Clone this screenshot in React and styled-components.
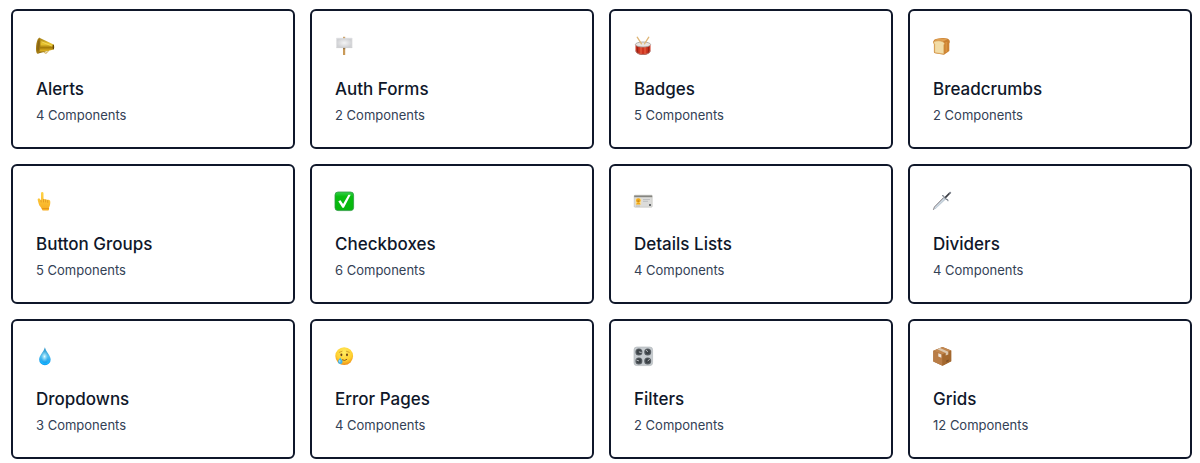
import React from 'react'
import styled, { createGlobalStyle } from 'styled-components'

const GlobalStyle = createGlobalStyle`
    body {
        margin: 0;
        background-color: #fff;
        font-family: Inter, 'Liberation Sans', sans-serif;
    }
`
const Grid = styled.ul`
    display: grid;
    grid-template-columns: repeat(4, minmax(0, 1fr));
    gap: 15px;
    margin: 0;
    padding: 9px 8px 4px 11px;
    list-style: none;
`
const Card = styled.a`
    display: block;
    padding: 23px;
    border: 2px solid #0f172a;
    border-radius: 6px;
    color: inherit;
    text-decoration: none;
`
const CardIcon = styled.div`
    display: flex;
    align-items: center;
    height: 24px;
`
const Emoji = styled.svg`
    width: 20px;
    height: 20px;
    overflow: visible;
`
const CardTitle = styled.h3`
    margin: 19px 0 5px;
    color: #0f172a;
    font-size: 17px;
    font-weight: 500;
    line-height: 24px;
`
const CardCount = styled.p`
    margin: 0;
    color: #334155;
    font-size: 13px;
    line-height: 18px;
`

const Megaphone = () => (
    <>
        <defs>
            <linearGradient id="horn" x1="0" y1="0" x2="0" y2="1">
                <stop offset="0" stopColor="#a07a10" />
                <stop offset=".4" stopColor="#ecc832" />
                <stop offset=".62" stopColor="#a37a08" />
                <stop offset=".8" stopColor="#d9ad22" />
                <stop offset="1" stopColor="#6e5005" />
            </linearGradient>
        </defs>
        <path d="M7.5 14.5c.2 3.600 4.200 3.600 5-.6" fill="none" stroke="#c79a25" strokeWidth="1" />
        <path d="M3.300 1.800 17.600 8.600Q19 11 17.600 13.400L2.200 17.600Z" fill="url(#horn)" />
        <path d="M3.400 1.500C1 3 0 8 0 13c0 3.500 1 5.400 2.400 4.600C4.500 15 5.300 5 3.400 1.500Z" fill="#a57c12" />
        <path d="M3.100 3.300C1.800 5.500 1.200 9 1.200 12c0 2.400.4 3.800 1 3.400C3.600 12.500 4.100 6 3.100 3.300Z" fill="#8a6714" />
        <path d="M5.500 5.800 16 10" stroke="#f6de62" strokeWidth=".8" />
        <path d="M17.400 8.800v4.400" stroke="#65480a" strokeWidth="1.200" />
    </>
)

const Placard = () => (
    <>
        <defs>
            <radialGradient id="board">
                <stop offset="0" stopColor="#f4f4f5" />
                <stop offset="1" stopColor="#d0d1d4" />
            </radialGradient>
        </defs>
        <path d="M8 .8h2.200V19H8z" fill="#c99a58" />
        <path d="M8 12h2.200v1.200H8z" fill="#8d6a3b" />
        <path d="M1.500 2.200h15.600v9.400H1.500z" fill="url(#board)" stroke="#e0e1e3" strokeWidth=".6" />
        <path d="M1.500 11.600h15.600" stroke="#bfc1c6" strokeWidth=".6" />
    </>
)

const Drum = () => (
    <>
        <path d="M1.500 8.500v6c0 2.600 3.400 4.500 7.500 4.500s7.500-1.900 7.500-4.500v-6z" fill="#cf3520" />
        <path d="M3.500 9v8M14.500 9v8" stroke="#9c2414" strokeWidth="1.500" />
        <path d="M7 10v8.400M11 10v8.400" stroke="#e96a48" strokeWidth="1" />
        <path d="M1.700 14.500c0 2.300 3.400 4 7.300 4s7.300-1.700 7.300-4" fill="none" stroke="#9f9290" strokeWidth=".7" />
        <ellipse cx="9" cy="8.500" rx="7.600" ry="2.500" fill="#e8e5e2" stroke="#a6a09c" strokeWidth=".8" />
        <path d="m3.200 1.200 4.300 6.600M14.800 1.200l-4.300 6.600" stroke="#dfb677" strokeWidth="1.300" strokeLinecap="round" />
    </>
)

const Bread = () => (
    <>
        <path d="M.3 5.200Q1 3 4 2.700L9 2q6-.3 7.500 2.200.9 1.700-.2 3.200v7.500L11 18.700 2 17.200Q.9 17 .9 16V8Q-.2 6.500.3 5.200Z" fill="#ca8030" />
        <path d="M2.500 3.500Q8 1.500 14.500 3.200L10.500 5.300Q6 4 1.700 5Z" fill="#dfa052" />
        <path d="M1.200 5.400Q6 4 10.300 5.900q2 1.500.5 3.200V18L2.500 16.700q-.8-.2-.8-1V8.400Q.2 6.800 1.200 5.400Z" fill="#f2dca6" stroke="#dba75c" strokeWidth=".6" />
        <path d="M13.300 6v10.200" stroke="#d9923f" strokeWidth="1.800" />
    </>
)

const PointingHand = () => (
    <>
        <defs>
            <linearGradient id="skin" x1="0" y1="0" x2="0" y2="1">
                <stop offset="0" stopColor="#ffd447" />
                <stop offset="1" stopColor="#f7ac20" />
            </linearGradient>
        </defs>
        <path d="M5 2.300Q5 1 6.200 1t1.300 1.300v6q1.200-.7 2 .3 1.300-.6 2 .4 1.700-.6 2.600.8.4.8.1 3.200c-.2 2-1.200 3-1.200 4v1.500q0 1-1 1H7q-.9 0-1-.9C5.800 16.700 3.200 15 2.700 12.700L1.700 9Q1.400 7.700 2.500 7.400q1-.2 1.400.7L5 9.500Z" fill="url(#skin)" />
        <path d="M7.500 8.300V11M9.600 8.700V11M11.700 9.200v2.200M4.900 9.300 5.200 11M6.200 17.500h6.500" fill="none" stroke="#d98518" strokeWidth=".6" strokeLinecap="round" />
    </>
)

const CheckMark = () => (
    <>
        <defs>
            <linearGradient id="tick" x1="0" y1="0" x2="0" y2="1">
                <stop offset="0" stopColor="#35cf4b" />
                <stop offset=".25" stopColor="#08bd10" />
                <stop offset="1" stopColor="#07b60d" />
            </linearGradient>
        </defs>
        <rect x="0" y="1" width="18.600" height="18.600" rx="3" fill="url(#tick)" stroke="#2e9b43" strokeWidth=".8" />
        <path d="M3.300 10.300 5.500 9.300 8.100 13.100 13.400 3.800h2.300L8.900 16.700H7.400Z" fill="#fff" />
    </>
)

const IdCard = () => (
    <>
        <rect x=".2" y="4.200" width="18" height="12" rx=".8" fill="#dcdcda" stroke="#b5b5b1" strokeWidth=".5" />
        <path d="M.2 4.500h18v1.700H.2z" fill="#85857f" />
        <path d="M1.500 7.500h5.700v6H1.500z" fill="#f8e1a6" />
        <circle cx="4.300" cy="9.500" r="2.300" fill="#f0a916" />
        <path d="M2 13.500q.3-2 2.300-2t2.300 2z" fill="#f0a916" />
        <path d="M3.500 9.500h1.600v1.200H3.500z" fill="#b9781c" />
        <path d="M9 8.500h7M9 10.300h5M2 15h4" stroke="#b0b2b4" strokeWidth=".7" />
        <path d="M15 13h2v2h-2z" fill="#686b6e" />
    </>
)

const Dagger = () => (
    <>
        <path d="M.3 18.900 1.400 15.900 10.600 6.500 12.600 8.500 3 17.400Z" fill="#b9c6d1" />
        <path d="M.3 18.900 1.400 15.900 10.600 6.500" fill="none" stroke="#8b8488" strokeWidth=".9" />
        <path d="M2 17.200 11.500 7.700" stroke="#e4edf4" strokeWidth=".7" />
        <path d="m11.800 7.200 5-5.200" stroke="#3a3c43" strokeWidth="1.800" />
        <path d="M9.500 4.600q1.100-.1 1.500 1.300l2.500 2.500q1.400.2 1.500 1.400" fill="none" stroke="#7e868f" strokeWidth="1.100" strokeLinecap="round" />
        <circle cx="17.100" cy="1.800" r="1.100" fill="#848992" />
    </>
)

const Droplet = () => (
    <>
        <defs>
            <linearGradient id="water" x1="0" y1="0" x2="0" y2="1">
                <stop offset="0" stopColor="#2f93c4" />
                <stop offset=".5" stopColor="#4fbdee" />
                <stop offset="1" stopColor="#0795ee" />
            </linearGradient>
            <radialGradient id="shine">
                <stop offset="0" stopColor="#e1fbff" />
                <stop offset="1" stopColor="#8adcfa" stopOpacity="0" />
            </radialGradient>
        </defs>
        <path d="M8.900 1.200C8 5.500 3.100 9.200 3.100 13.500a5.800 5.800 0 0 0 11.600 0C14.700 9.200 9.800 5.500 8.900 1.200Z" fill="url(#water)" />
        <ellipse cx="8.500" cy="10.500" rx="3.600" ry="5.500" fill="url(#shine)" />
        <path d="M5 15q1.500 3 4 3t4-3" fill="none" stroke="#18b9ff" strokeWidth="1.200" />
    </>
)

const TearFace = () => (
    <>
        <defs>
            <radialGradient id="face" cx=".5" cy=".3" r=".7">
                <stop offset="0" stopColor="#ffed63" />
                <stop offset=".65" stopColor="#ffd02f" />
                <stop offset="1" stopColor="#ee8d16" />
            </radialGradient>
        </defs>
        <circle cx="9.200" cy="10.100" r="8.900" fill="url(#face)" />
        <ellipse cx="6.400" cy="8.800" rx="1" ry="1.400" fill="#704214" />
        <ellipse cx="12" cy="8.800" rx="1" ry="1.400" fill="#704214" />
        <path d="M4.300 6.300 7 5.300M11.500 5.300l2.700 1" fill="none" stroke="#c08a20" strokeWidth=".7" strokeLinecap="round" />
        <path d="M7.300 13.900q2.500 1.500 4.500-.4" fill="none" stroke="#83501a" strokeWidth=".9" strokeLinecap="round" />
        <path d="M5.200 11.300C4.900 13 3 14 3 15.800a2.300 2.300 0 0 0 4.600 0C7.600 14 5.600 13 5.200 11.300Z" fill="#42b5ee" />
        <path d="M4.800 14.300v1.500" stroke="#c9f2ff" strokeWidth=".9" strokeLinecap="round" />
    </>
)

const Knob = ({ x, y, tip }) => (
    <g>
        <circle cx={x} cy={y} r="3.500" fill="#565c61" />
        <circle cx={x} cy={y} r="2.300" fill="#3b4146" />
        <path d={`M${x} ${y}l${tip}`} stroke="#c9cdd0" strokeWidth=".9" />
    </g>
)

const ControlKnobs = () => (
    <>
        <rect x="0" y="1" width="18.600" height="18.600" rx="2.800" fill="#c6cbcf" stroke="#adb3b7" strokeWidth=".6" />
        <Knob x={4.9} y={5.9} tip="2.600 .6" />
        <Knob x={13.7} y={5.9} tip="-1.500 -2" />
        <Knob x={4.9} y={14.9} tip="-2.400 -.8" />
        <Knob x={13.7} y={14.9} tip="2 -1.500" />
    </>
)

const Package = () => (
    <>
        <path d="M.3 4.800 9.500 1l8.700 3.500v10.700l-8.700 4.600L.3 15.600Z" fill="#a0652f" />
        <path d="M.3 4.800 9.500 8.300v11.500L.3 15.600Z" fill="#b97d47" />
        <path d="M9.500 8.300 18.200 4.500v10.700l-8.700 4.600Z" fill="#a3682f" />
        <path d="M.3 4.800 9.500 1l8.700 3.500-8.700 3.800Z" fill="#c2874f" />
        <path d="M4.300 3.200 7 2.100l8.300 3.600v2.700l-2.600 1.200V6.900Z" fill="#dcc7ae" />
        <path d="m5.300 7.300 3 1.200v3.200l-3-1.200Z" fill="#eee5da" />
        <path d="m13.300 14.500 2.300-1v1.700l-2.300 1Z" fill="#7e5026" />
    </>
)

const collections = [
    { title: 'Alerts', count: 4, icon: Megaphone },
    { title: 'Auth Forms', count: 2, icon: Placard },
    { title: 'Badges', count: 5, icon: Drum },
    { title: 'Breadcrumbs', count: 2, icon: Bread },
    { title: 'Button Groups', count: 5, icon: PointingHand },
    { title: 'Checkboxes', count: 6, icon: CheckMark },
    { title: 'Details Lists', count: 4, icon: IdCard },
    { title: 'Dividers', count: 4, icon: Dagger },
    { title: 'Dropdowns', count: 3, icon: Droplet },
    { title: 'Error Pages', count: 4, icon: TearFace },
    { title: 'Filters', count: 2, icon: ControlKnobs },
    { title: 'Grids', count: 12, icon: Package },
]

const App = () => {
    return (
        <>
            <GlobalStyle />
            <Grid>
                {collections.map(({ title, count, icon: Icon }) => (
                    <li key={title}>
                        <Card href={`#${title.toLowerCase().replace(' ', '-')}`}>
                            <CardIcon>
                                <Emoji viewBox="0 0 20 20" aria-hidden="true">
                                    <Icon />
                                </Emoji>
                            </CardIcon>
                            <CardTitle>{title}</CardTitle>
                            <CardCount>{count} Components</CardCount>
                        </Card>
                    </li>
                ))}
            </Grid>
        </>
    )
}

export default App
